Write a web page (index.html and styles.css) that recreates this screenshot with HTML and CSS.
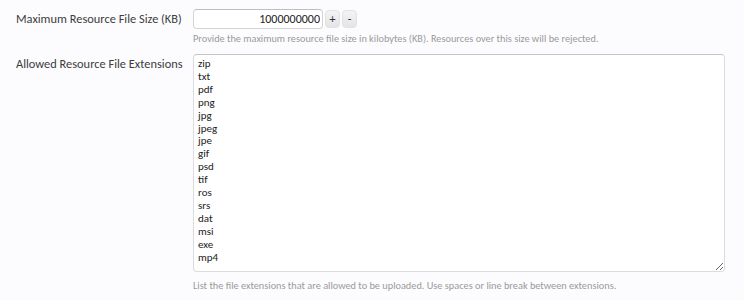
FILE: index.html
```html
<!DOCTYPE html>
<html>
<head>
<meta charset="utf-8">
<link rel="stylesheet" href="styles.css">
</head>
<body>
<div class="form">
  <div class="row">
    <label class="label">Maximum Resource File Size (KB)</label>
    <div class="ctrl">
      <div class="spinbox">
        <input class="num" type="text" value="1000000000">
        <button class="spin">+</button>
        <button class="spin">-</button>
      </div>
      <p class="hint">Provide the maximum resource file size in kilobytes (KB). Resources over this size will be rejected.</p>
    </div>
  </div>
  <div class="row row2">
    <label class="label">Allowed Resource File Extensions</label>
    <div class="ctrl">
      <textarea class="area">zip
txt
pdf
png
jpg
jpeg
jpe
gif
psd
tif
ros
srs
dat
msi
exe
mp4</textarea>
      <p class="hint">List the file extensions that are allowed to be uploaded. Use spaces or line break between extensions.</p>
    </div>
  </div>
</div>
</body>
</html>
```
FILE: styles.css
```css
html, body {
  margin: 0;
  padding: 0;
  background: #fcfcfe;
}
body {
  font-family: Carlito, Lato, "Open Sans", sans-serif;
  color: #333;
}
.form {
  padding: 9px 0 0 16px;
}
.row {
  display: grid;
  grid-template-columns: 177px 532px;
}
.row2 {
  margin-top: 8px;
}
.label {
  font-size: 12.4px;
  line-height: 18px;
  padding-top: 1px;
  color: #3c3c3c;
}
.spinbox {
  display: flex;
  align-items: center;
  gap: 2px;
}
.num {
  box-sizing: border-box;
  width: 130px;
  height: 20px;
  margin: 0;
  padding: 0 2px 0 4px;
  border: 1px solid #d4d4d8;
  border-top-color: #bdbdc2;
  border-radius: 4px;
  background: #fff;
  font-family: inherit;
  font-size: 12px;
  text-align: right;
  color: #222;
  outline: none;
}
.spin {
  box-sizing: border-box;
  width: 15px;
  height: 18px;
  margin: 0;
  padding: 0;
  border: 1px solid #e2e2e6;
  border-radius: 4px;
  background: linear-gradient(#f4f4f6, #e4e4e8);
  font-family: inherit;
  font-size: 12px;
  line-height: 14px;
  color: #333;
}
.hint {
  margin: 3px 0 0 0;
  font-size: 10.3px;
  line-height: 14px;
  color: #9a9a9a;
}
.area {
  display: block;
  box-sizing: border-box;
  width: 532px;
  height: 218px;
  margin: 0;
  padding: 3px 4px;
  border: 1px solid #dcdce0;
  border-top-color: #c4c4c8;
  border-radius: 4px;
  background: #fff;
  font-family: inherit;
  font-size: 11px;
  line-height: 12.9px;
  color: #222;
  resize: vertical;
  outline: none;
}
.row2 .hint {
  margin-top: 7px;
}
```
